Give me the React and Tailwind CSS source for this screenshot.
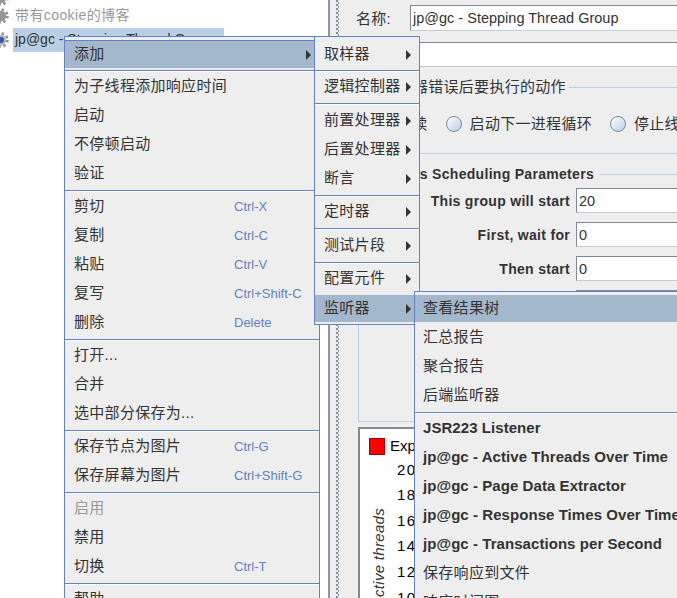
import React from "react";

const cjk = "font-['Liberation_Sans','Noto_Sans_CJK_SC',sans-serif]";

const Gear = ({ center }) => (
  <svg viewBox="0 0 16 16" className="w-4 h-4 flex-none -ml-[7px]">
    <circle cx="8" cy="8" r="6.4" fill="none" stroke="#8f8f8f" strokeWidth="2.6" strokeDasharray="2.4 2.6" />
    <circle cx="8" cy="8" r="5.2" fill={center ? "#b9b9b9" : "#979797"} />
    {center && <circle cx="8" cy="8" r="3" fill="#2f5f9e" />}
  </svg>
);

const Arrow = () => (
  <svg viewBox="0 0 5 10" className="w-[5px] h-[10px] flex-none ml-auto mr-2">
    <polygon points="0,0 5,5 0,10" fill="#333333" />
  </svg>
);

const Item = ({ label, shortcut, arrow, active, first, bold, disabled, tight }) => (
  <div
    className={`flex items-center whitespace-nowrap text-[15px] ${tight ? "pl-2" : "pl-[9px]"} ${first ? "h-[27px]" : "h-[29px]"} ${active ? "bg-[#a3b8cc]" : ""} ${bold ? "font-bold tracking-[0.06px]" : "tracking-[0.3px]"} ${disabled ? "text-[#999999]" : "text-[#333333]"}`}
  >
    <span className={shortcut ? "w-[160px] flex-none" : ""}>{label}</span>
    {shortcut && <span className="text-[13px] tracking-normal text-[#6382bf]">{shortcut}</span>}
    {arrow && <Arrow />}
  </div>
);

const Sep = ({ wide, after }) => (
  <div className={`${wide ? "pt-[3px]" : "pt-[2px]"} ${after ? "pb-px" : ""}`}>
    <div className="h-px bg-[#6382bf]" />
    <div className="h-px bg-white" />
  </div>
);

const Radio = ({ label }) => (
  <div className="flex items-center gap-2">
    <span className="w-4 h-4 rounded-full border border-[#7a8a99] bg-gradient-to-br from-white to-[#b8cfe5] flex-none" />
    <span className="text-[15px] tracking-[0.3px] text-[#333333] whitespace-nowrap">{label}</span>
  </div>
);

const Field = ({ value, className }) => (
  <div className={`flex-1 flex items-center pl-[2px] pt-[2px] bg-white border border-[#7a8a99] border-b-[#c3ccd4] border-r-0 text-[14.5px] text-[#333333] whitespace-nowrap ${className}`}>
    {value}
  </div>
);

const ParamRow = ({ label, value }) => (
  <div className="flex h-[25px] items-center">
    <span className="w-[211px] flex-none pt-px text-right font-bold text-[14px] tracking-[0.3px] text-[#333333] whitespace-nowrap">{label}</span>
    <Field value={value} className="ml-[6px] h-[25px]" />
  </div>
);

const Tick = ({ value }) => (
  <div className="h-[25.6px] flex items-center text-[15px] tracking-[1.5px] text-black">{value}</div>
);

export default function App() {
  return (
    <div className={`relative w-[677px] h-[598px] overflow-hidden bg-white flex ${cjk}`}>
      {/* tree */}
      <div className="w-[328px] flex-none overflow-hidden -mt-2">
        <div className="h-3 flex items-center"><Gear /></div>
        <div className="h-[23px] flex items-center text-[14px] tracking-[0.4px] text-[#999999]">
          <Gear />
          <span className="ml-[6px]">带有cookie的博客</span>
        </div>
        <div className="h-[25px] flex items-center text-[14px] text-[#333333]">
          <Gear center />
          <span className="ml-1 w-[211px] h-6 flex items-center pl-[2px] bg-[#b8cfe5] whitespace-nowrap">jp@gc - Stepping Thread Group</span>
        </div>
      </div>

      {/* splitter */}
      <div className="w-[2px] flex-none bg-[#8a96a1]" />
      <div className="w-[10px] flex-none bg-[#eeeeee] flex pl-[6px]">
        <div className="w-[2px] bg-[repeating-linear-gradient(to_bottom,#7f8c99_0,#7f8c99_2px,transparent_2px,transparent_4px)]" />
        <div className="w-[1px] mt-[2px] bg-[repeating-linear-gradient(to_bottom,#7f8c99_0,#7f8c99_2px,transparent_2px,transparent_4px)]" />
      </div>

      {/* right panel */}
      <div className="flex-1 min-w-0 bg-[#eeeeee] pt-[5px]">
        <div className="flex items-center h-[26px] pl-4">
          <span className="w-[54px] flex-none pt-[2px] text-[15px] tracking-[0.3px] text-[#333333]">名称:</span>
          <Field value="jp@gc - Stepping Thread Group" className="h-[26px]" />
        </div>
        <div className="flex items-center h-[25px] mt-[11px] pl-[70px]">
          <Field value="" className="h-[25px]" />
        </div>
        <div className="flex items-center h-5 mt-[10px] pl-[27px]">
          <span className="text-[15px] tracking-[0.3px] text-[#333333] whitespace-nowrap">在取样器错误后要执行的动作</span>
          <div className="flex-1 h-px ml-[3px] bg-[#b8cfe5]" />
        </div>
        <div className="flex items-center h-5 mt-[17px] pl-[33px] gap-[18px] overflow-hidden">
          <Radio label="继续" />
          <Radio label="启动下一进程循环" />
          <Radio label="停止线程" />
        </div>
        <div className="h-px mt-[19px] ml-[18px] bg-[#b8cfe5]" />
        <div className="h-[258px] mt-[10px] ml-[18px] border-l border-b border-[#b8cfe5]">
          <div className="flex items-center h-5">
            <span className="w-[235px] flex-none text-right font-bold text-[14px] tracking-[0.3px] text-[#333333] whitespace-nowrap">Threads Scheduling Parameters</span>
            <div className="flex-1 h-px ml-[5px] bg-[#b8cfe5]" />
          </div>
          <div className="flex flex-col gap-[9px] mt-1">
            <ParamRow label="This group will start" value="20" />
            <ParamRow label="First, wait for" value="0" />
            <ParamRow label="Then start" value="0" />
            <ParamRow label="Next, add" value="10" />
          </div>
        </div>
        <div className="h-[300px] mt-[5px] ml-[18px] border-2 border-r-0 border-[#888888] bg-white">
          <div className="flex items-center h-[26px] pt-[9px] pl-[9px]">
            <span className="w-4 h-[17px] bg-[#ff0000] border border-[#a00000] flex-none" />
            <span className="ml-[5px] text-[15px] text-black whitespace-nowrap">Expected Active Users</span>
          </div>
          <div className="flex ml-[10px]">
            <span className="mt-[53px] [writing-mode:vertical-rl] rotate-180 italic text-[15px] tracking-[0.3px] leading-[18px] text-[#333333] whitespace-nowrap flex-none self-start">
              Number of active threads
            </span>
            <div className="ml-[9px] mt-[2px]">
              <Tick value="20" />
              <Tick value="18" />
              <Tick value="16" />
              <Tick value="14" />
              <Tick value="12" />
              <Tick value="10" />
            </div>
          </div>
        </div>
      </div>

      {/* main context menu */}
      <div className="absolute left-[64px] top-9 w-[256px] border border-[#6382bf] bg-[#eeeeee] pt-[3px]">
        <div className="h-px bg-[#6382bf]" />
        <Item label="添加" arrow active first />
        <Sep />
        <Item label="为子线程添加响应时间" />
        <Item label="启动" />
        <Item label="不停顿启动" />
        <Item label="验证" />
        <Sep />
        <Item label="剪切" shortcut="Ctrl-X" />
        <Item label="复制" shortcut="Ctrl-C" />
        <Item label="粘贴" shortcut="Ctrl-V" />
        <Item label="复写" shortcut="Ctrl+Shift-C" />
        <Item label="删除" shortcut="Delete" />
        <Sep />
        <Item label="打开..." />
        <Item label="合并" />
        <Item label="选中部分保存为..." />
        <Sep />
        <Item label="保存节点为图片" shortcut="Ctrl-G" />
        <Item label="保存屏幕为图片" shortcut="Ctrl+Shift-G" />
        <Sep />
        <Item label="启用" disabled />
        <Item label="禁用" />
        <Item label="切换" shortcut="Ctrl-T" />
        <Sep />
        <Item label="帮助" />
      </div>

      {/* add submenu */}
      <div className="absolute left-[314px] top-9 w-[106px] border border-[#6382bf] bg-[#eeeeee] pt-1 pb-[2px]">
        <Item label="取样器" arrow first />
        <Sep />
        <Item label="逻辑控制器" arrow />
        <Sep after />
        <Item label="前置处理器" arrow />
        <Item label="后置处理器" arrow />
        <Item label="断言" arrow />
        <Sep />
        <Item label="定时器" arrow />
        <Sep after />
        <Item label="测试片段" arrow />
        <Sep />
        <Item label="配置元件" arrow />
        <div className="h-[2px]" />
        <Item label="监听器" arrow active first />
      </div>

      {/* listener submenu */}
      <div className="absolute left-[414px] top-[291px] w-[320px] border border-[#6382bf] bg-[#eeeeee] pt-[3px]">
        <Item label="查看结果树" active first tight />
        <div className="h-px" />
        <Item label="汇总报告" tight />
        <Item label="聚合报告" tight />
        <Item label="后端监听器" tight />
        <Sep />
        <Item label="JSR223 Listener" bold tight />
        <Item label="jp@gc - Active Threads Over Time" bold tight />
        <Item label="jp@gc - Page Data Extractor" bold tight />
        <Item label="jp@gc - Response Times Over Time" bold tight />
        <Item label="jp@gc - Transactions per Second" bold tight />
        <Item label="保存响应到文件" tight />
        <Item label="响应时间图" tight />
      </div>
    </div>
  );
}
